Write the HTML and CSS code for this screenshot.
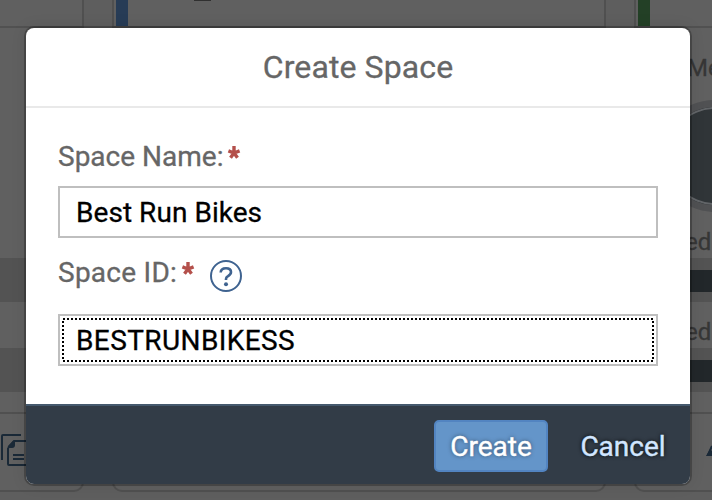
FILE: index.html
```html
<!DOCTYPE html>
<html lang="en">
<head>
<meta charset="utf-8">
<title>Create Space</title>
<link rel="stylesheet" href="styles.css">
</head>
<body>
<main class="spaces" aria-hidden="true">
  <section class="card card-left">
    <div class="card-head"></div>
    <div class="card-body">
      <div class="band"></div>
      <div class="band"></div>
    </div>
    <div class="card-foot">
      <svg class="copy" width="30" height="34" viewBox="0 0 30 34" fill="none" stroke="#1a2937" stroke-width="2">
        <path d="M1 27V3Q1 2 2 2H20"/>
        <path d="M7 15L13 8H30M7 15V31Q7 32 8 32H30M12 22H23M12 26H23"/>
        <path d="M7 15V13L12 8H14V12Q14 15 11 15Z" fill="#1a2937" stroke="none"/>
      </svg>
    </div>
  </section>
  <section class="card">
    <div class="card-head"><i class="stripe blue"></i><i class="descender"></i></div>
    <div class="card-body"></div>
    <div class="card-foot"></div>
  </section>
  <section class="card card-right">
    <div class="card-head"><i class="stripe green"></i></div>
    <div class="card-body">
      <span class="metric">Me</span>
      <div class="dial"></div>
      <span class="usage usage-one">ed</span>
      <div class="band"><div class="bar"></div></div>
      <span class="usage usage-two">ed</span>
      <div class="band"><div class="bar"></div></div>
    </div>
    <div class="card-foot">
      <svg class="edit" width="6" height="24" viewBox="0 0 6 24" fill="none" stroke="#1a2937" stroke-width="2"><path d="M6 6L2 15H6"/><path d="M0 16L4 9L6 11V16Z" fill="#1a2937" stroke="none"/></svg>
    </div>
  </section>
</main>
<div class="dialog" role="dialog" aria-labelledby="title">
  <header class="dialog-head"><h1 id="title">Create Space</h1></header>
  <form class="dialog-body">
    <div class="label"><label for="name">Space Name:</label><svg class="star" width="14" height="14" viewBox="0 0 14 14"><path d="M7 0V7M1.4 4.8L7 7L12.6 4.8M3.5 11.8L7 7L10.5 11.8"/></svg></div>
    <input class="name" id="name" value="Best Run Bikes">
    <div class="label label-id"><label for="id">Space ID:</label><svg class="star" width="14" height="14" viewBox="0 0 14 14"><path d="M7 0V7M1.4 4.8L7 7L12.6 4.8M3.5 11.8L7 7L10.5 11.8"/></svg>
      <svg class="help" width="32" height="32" viewBox="0 0 32 32" fill="none" stroke="#3f6390" stroke-width="2"><circle cx="16" cy="16" r="15"/><path stroke-width="2.6" d="M10.7 12.5C10.8 9.5 13 8.2 16 8.2C19 8.2 21 9.6 21 12C21 14.2 19.7 15 18 16.1C16.5 17 16 17.6 16 19V20"/><circle cx="16" cy="24.2" r="2" fill="#3f6390" stroke="none"/></svg>
    </div>
    <div class="focus-field"><input class="id" id="id" value="BESTRUNBIKESS"><svg class="focus-ring" width="592" height="44" viewBox="0 0 592 44"><rect x="1" y="1" width="590" height="42"/></svg></div>
  </form>
  <footer class="dialog-foot">
    <button class="create"><span>Create</span></button>
    <button class="cancel"><span>Cancel</span></button>
  </footer>
</div>
</body>
</html>
```
FILE: styles.css
```css
* { box-sizing: border-box; }
body {
  margin: 0;
  width: 712px;
  height: 500px;
  overflow: hidden;
  background: #5e5e5e;
  font-family: Roboto, "Noto Sans", sans-serif;
}
.spaces {
  display: grid;
  grid-template-columns: 84px 494px 78px;
  gap: 28px;
  width: 712px;
  height: 492px;
}
.card {
  display: flex;
  flex-direction: column;
  border: 2px solid #505050;
  border-top: 0;
  border-radius: 0 0 10px 10px;
  background: #606060;
}
.card-left { border-left: 0; border-bottom-left-radius: 0; }
.card-right { border-right: 0; border-bottom-right-radius: 0; overflow: hidden; }
.card-head { display: flex; flex-shrink: 0; height: 28px; border-bottom: 2px solid #515151; }
.stripe { width: 12px; height: 26px; margin-left: 2px; }
.blue { background: #273c56; }
.green { background: #234026; }
.descender { width: 17px; height: 1px; margin-left: 66px; background: #303030; }
.card-body { position: relative; flex-shrink: 0; height: 384px; padding-top: 230px; }
.band { height: 44px; margin-bottom: 46px; padding: 12px 0; background: #535353; }
.bar { height: 22px; background: #22272a; }
.card-foot { flex: 1; border-top: 2px solid #505050; }
.copy { display: block; margin: 19px 0 0 1px; }
.edit { display: block; margin: 26px 0 0 70px; }
.metric, .usage { position: absolute; color: #363636; font-size: 24px; line-height: 28px; -webkit-text-stroke: .3px; }
.metric { left: 51px; top: 26px; }
.usage { left: 49px; }
.usage-one { top: 200px; }
.usage-two { top: 290px; }
.dial {
  position: absolute;
  left: 23px;
  top: 72px;
  width: 112px;
  height: 112px;
  border: 7px solid #505153;
  border-radius: 50%;
  background: #303538;
  box-shadow: inset 0 0 0 2px #626568;
}
.dialog {
  position: absolute;
  left: 26px;
  top: 28px;
  width: 664px;
  height: 456px;
  overflow: hidden;
  display: flex;
  flex-direction: column;
  border-radius: 8px;
  background: #fff;
  box-shadow: 0 0 0 2px rgba(0, 0, 0, .24), 0 0 16px rgba(0, 0, 0, .1);
}
.dialog-head { height: 80px; padding-top: 18px; border-bottom: 2px solid #e9e9e9; text-align: center; }
h1 { margin: 0; color: #666; font-size: 32px; font-weight: 400; line-height: 42px; letter-spacing: .1px; -webkit-text-stroke: .3px; }
.dialog-body { flex: 1; padding: 32px 32px 0; }
.label { display: flex; height: 46px; color: #666; font-size: 28px; line-height: 34px; -webkit-text-stroke: .3px; }
.star { margin: 6px 0 0 4px; overflow: visible; fill: none; stroke: #b4504b; stroke-width: 3.4; }
.help { margin: 4px 0 0 15px; }
.label-id { height: 58px; margin-top: 18px; letter-spacing: .25px; }
input {
  display: block;
  width: 600px;
  height: 52px;
  margin: 0;
  padding: 0 16px;
  border: 2px solid #bfbfbf;
  border-radius: 0;
  outline: 0;
  background: #fff;
  color: #000;
  font: 28px Roboto, "Noto Sans", sans-serif;
  letter-spacing: .05px;
  -webkit-text-stroke: .3px;
}
.id { letter-spacing: .4px; }
.focus-field { position: relative; }
.focus-ring { position: absolute; left: 4px; top: 4px; pointer-events: none; }
.focus-ring rect { fill: none; stroke: #000; stroke-width: 2; stroke-dasharray: 2 2; }
.dialog-foot {
  display: flex;
  height: 80px;
  padding: 14px 8px 0 408px;
  gap: 16px;
  border-top: 2px solid #45596d;
  background: #323c47;
}
button { height: 52px; padding: 0; border: 2px solid transparent; border-radius: 5px; font: 28px Roboto, "Noto Sans", sans-serif; background: none; -webkit-text-stroke: .4px; }
.create { width: 114px; border-color: #5284c1; background: #6495c9; color: #fff; text-shadow: 0 0 4px rgba(0, 0, 0, .5); }
.cancel { width: 118px; color: #d1e6ff; text-shadow: 0 0 4px #000; }
```
